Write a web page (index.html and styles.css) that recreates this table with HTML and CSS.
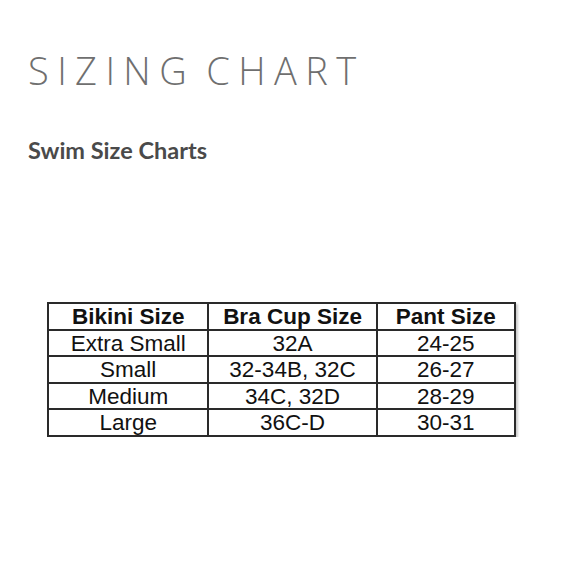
FILE: index.html
```html
<!DOCTYPE html>
<html>
<head>
<meta charset="utf-8">
<link rel="stylesheet" href="styles.css">
</head>
<body>
<main class="page">
  <h1 class="title">SIZING CHART</h1>
  <h2 class="subtitle">Swim Size Charts</h2>
  <div class="chart-wrap">
    <table class="chart">
      <colgroup>
        <col class="c1"><col class="c2"><col class="c3">
      </colgroup>
      <thead>
        <tr><th>Bikini Size</th><th>Bra Cup Size</th><th>Pant Size</th></tr>
      </thead>
      <tbody>
        <tr><td>Extra Small</td><td>32A</td><td>24-25</td></tr>
        <tr><td>Small</td><td>32-34B, 32C</td><td>26-27</td></tr>
        <tr><td>Medium</td><td>34C, 32D</td><td>28-29</td></tr>
        <tr><td>Large</td><td>36C-D</td><td>30-31</td></tr>
      </tbody>
    </table>
  </div>
</main>
</body>
</html>
```
FILE: styles.css
```css
html, body {
  margin: 0;
  padding: 0;
  background: #fff;
}
.page {
  padding: 46px 0 0 28px;
}
.title {
  margin: 0;
  font-family: "Open Sans", "DejaVu Sans", sans-serif;
  font-weight: 300;
  font-size: 38px;
  line-height: 48px;
  letter-spacing: 8.4px;
  word-spacing: -7px;
  color: #6f6f6f;
}
.subtitle {
  margin: 42px 0 0 0;
  font-family: Lato, "Noto Sans", sans-serif;
  font-weight: 700;
  font-size: 23.5px;
  line-height: 28px;
  color: #4a4a4a;
}
.chart-wrap {
  margin: 138px 0 0 19px;
  width: 472px;
}
.chart {
  border-collapse: collapse;
  width: 469px;
  font-family: "Liberation Sans", Arial, sans-serif;
  font-size: 22.5px;
  color: #111;
  box-shadow: 2px 2px 2px rgba(0,0,0,0.2);
}
.c1 { width: 161px; }
.c2 { width: 169px; }
.c3 { width: 139px; }
.chart th, .chart td {
  border: 2px solid #2a2a2a;
  height: 22.5px;
  padding: 2px 0 0 0;
  line-height: 22px;
  text-align: center;
}
.chart th {
  font-weight: 700;
}
```
